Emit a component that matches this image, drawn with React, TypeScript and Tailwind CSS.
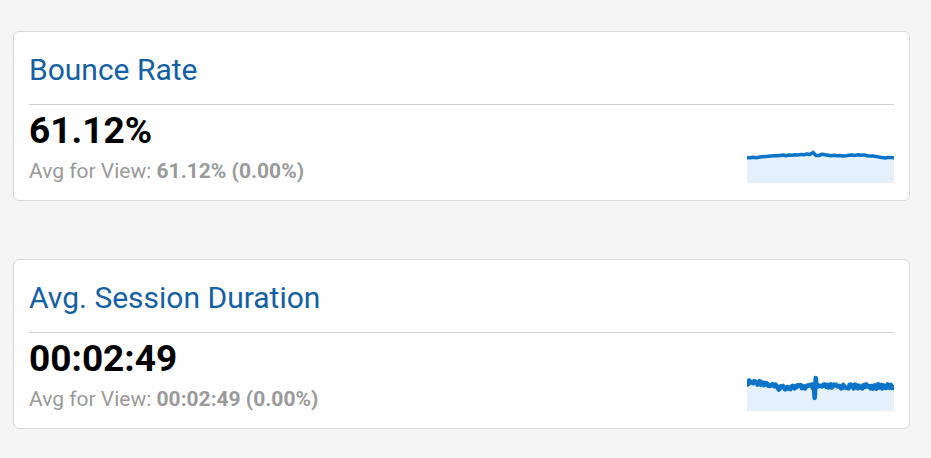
import React from 'react';

interface MetricCardProps {
  title:   string;
  value:   string;
  avg:     string;
  series:  number[];
  stroke?: number;
}

const W = 147;
const H = 36;

// build sparkline paths from a list of y values
const toPath = (ys: number[]) => {
  const step = W / (ys.length - 1);
  return ys.map((y, i) => `${i === 0 ? 'M' : 'L'}${(i * step).toFixed(2)},${y.toFixed(2)}`).join(' ');
};

const jitter = (i: number, amp: number) => {
  const v = Math.sin(i * 12.9898) * 43758.5453;
  return (v - Math.floor(v) - 0.5) * amp;
};

const bounceSeries = [
  9, 9, 8.5, 9, 8.4, 8, 7.6, 7.5, 7.2, 7, 7, 6.6, 6.2, 7, 6.2, 6.5, 6, 6.2, 5.6, 6,
  5.2, 5.6, 3.6, 6.6, 6.8, 5.4, 6, 6.5, 7, 6.5, 7, 6.6, 7.1, 7, 6.5, 6.1, 6.6, 6,
  6.4, 6.1, 7, 7.2, 7.2, 7.6, 8.2, 8.8, 9.2, 8.8, 8.6, 9,
].map((y) => y + 1.8);

const sessionSeries = (() => {
  const pts: number[] = [];
  const n = 140;
  for (let i = 0; i < n; i++) {
    const x = i / (n - 1);
    let base = 12;
    if (x < 0.1) base = 7.5;
    else if (x < 0.2) base = 7.5 + (x - 0.1) * 45;
    else if (x < 0.45) base = 12.5 - (x - 0.2) * 4;
    else base = 11.5;
    let y = base + jitter(i, 4.5);
    if (i === 64) y = 23;
    if (i === 65) y = 3;
    pts.push(y);
  }
  return pts;
})();

const Sparkline: React.FC<{ series: number[]; stroke: number }> = ({ series, stroke }) => {
  const line = toPath(series);
  const area = `${line} L${W},${H} L0,${H} Z`;
  return (
    <svg width={W} height={H} viewBox={`0 0 ${W} ${H}`} className="block shrink-0">
      <path d={area} fill="#e4f0fa" />
      <path d={line} fill="none" stroke="#0b74c9" strokeWidth={stroke} strokeLinejoin="round" />
    </svg>
  );
};

const MetricCard: React.FC<MetricCardProps> = ({ title, value, avg, series, stroke = 3.5 }) => (
  <div className="bg-white border border-[#d9d9d9] rounded-[6px] px-[15px] pt-[21px] pb-[17px]">
    <h2 className="text-[30px] leading-[34px] text-[#1360a4] font-normal">{title}</h2>
    <div className="h-px bg-[#cfcfcf] mt-[17px]" />
    <div className="flex items-end justify-between mt-[6px]">
      <div>
        <div className="text-[37px] leading-[40px] font-bold text-black">{value}</div>
        <div className="text-[21px] leading-[24px] text-[#9a9a9a] mt-[8px]">
          Avg for View: <span className="font-bold">{avg}</span>
        </div>
      </div>
      <Sparkline series={series} stroke={stroke} />
    </div>
  </div>
);

export default function App() {
  return (
    <div
      className="w-[931px] h-[458px] bg-[#f5f5f5] pl-[13px] pr-[21px] pt-[31px] flex flex-col gap-[58px]"
      style={{ fontFamily: 'Roboto, "Liberation Sans", sans-serif' }}
    >
      <MetricCard title="Bounce Rate" value="61.12%" avg="61.12% (0.00%)" series={bounceSeries} />
      <MetricCard
        title="Avg. Session Duration"
        value="00:02:49"
        avg="00:02:49 (0.00%)"
        series={sessionSeries}
        stroke={4.5}
      />
    </div>
  );
}
